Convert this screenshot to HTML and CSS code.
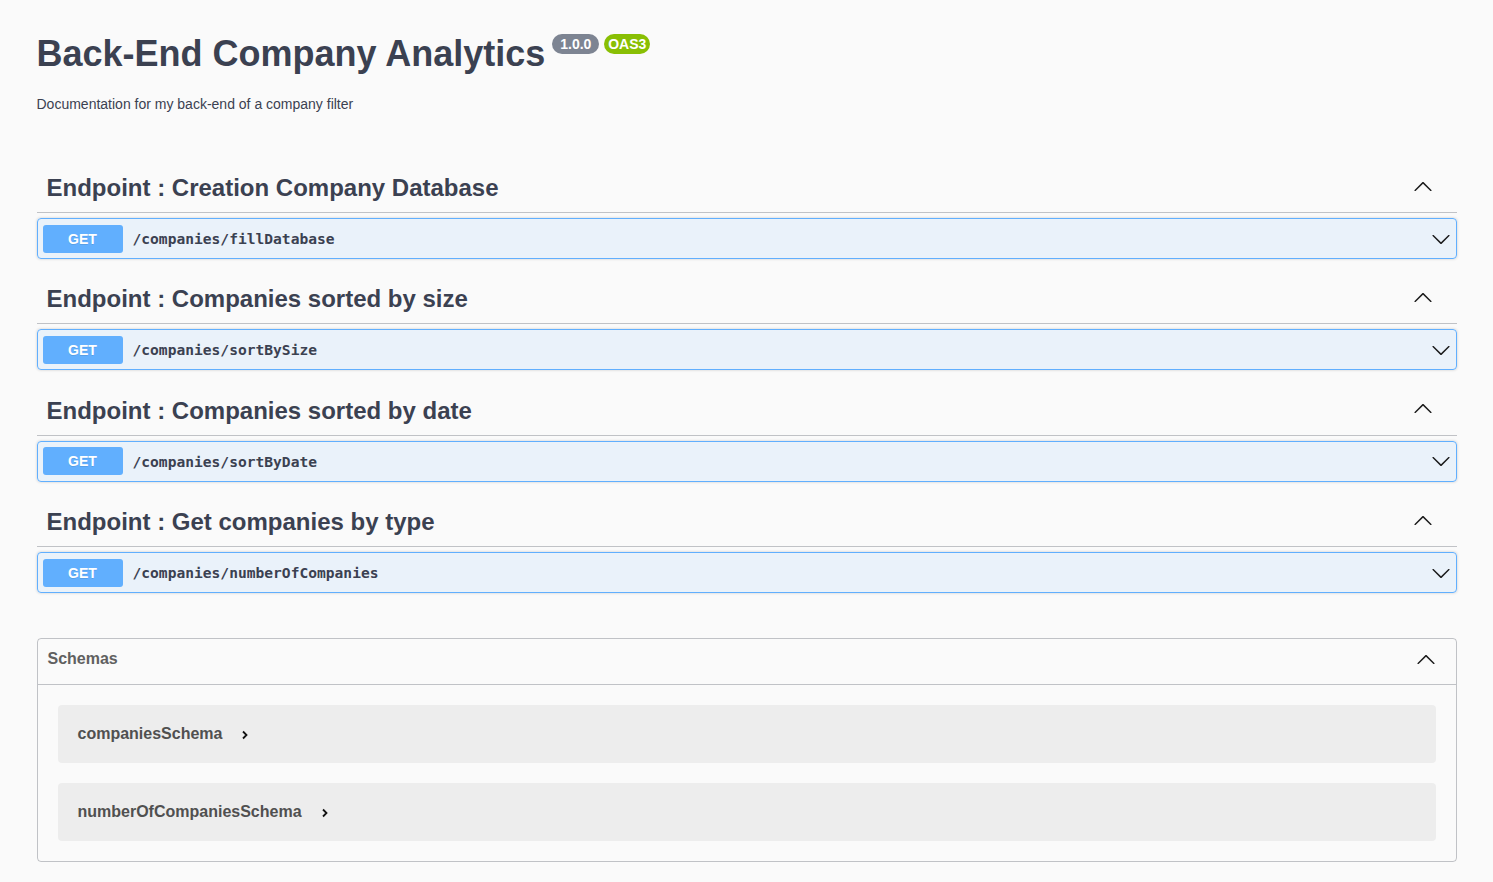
FILE: index.html
```html
<!DOCTYPE html>
<html lang="en">
<head>
<meta charset="utf-8">
<title>Back-End Company Analytics</title>
<link rel="stylesheet" href="styles.css">
</head>
<body>
<div class="wrapper">
  <div class="info">
    <h2 class="title"><span class="title-text">Back-End Company Analytics</span><small class="badge first"><pre> 1.0.0 </pre></small><small class="badge oas"><pre>OAS3</pre></small></h2>
    <p class="desc">Documentation for my back-end of a company filter</p>
  </div>

  <div class="tags">
    <div class="tag-section">
      <h3 class="tag"><span>Endpoint : Creation Company Database</span><span class="spacer"></span><svg class="arrow up" width="20" height="20" viewBox="0 0 20 20"><path d="M17.418 14.908c.272.268.709.268.979 0s.271-.701 0-.969l-7.908-7.83c-.27-.268-.707-.268-.979 0l-7.908 7.83c-.27.268-.27.701 0 .969.271.268.709.268.979 0L10 7.767l7.418 7.141z"/></svg></h3>
      <div class="opblock"><div class="summary"><span class="method">GET</span><span class="path">/companies/fillDatabase</span><span class="spacer"></span><svg class="arrow" width="20" height="20" viewBox="0 0 20 20"><path d="M17.418 6.109c.272-.268.709-.268.979 0s.271.701 0 .969l-7.908 7.83c-.27.268-.707.268-.979 0l-7.908-7.83c-.27-.268-.27-.701 0-.969.271-.268.709-.268.979 0L10 13.25l7.418-7.141z"/></svg></div></div>
    </div>
    <div class="tag-section">
      <h3 class="tag"><span>Endpoint : Companies sorted by size</span><span class="spacer"></span><svg class="arrow up" width="20" height="20" viewBox="0 0 20 20"><path d="M17.418 14.908c.272.268.709.268.979 0s.271-.701 0-.969l-7.908-7.83c-.27-.268-.707-.268-.979 0l-7.908 7.83c-.27.268-.27.701 0 .969.271.268.709.268.979 0L10 7.767l7.418 7.141z"/></svg></h3>
      <div class="opblock"><div class="summary"><span class="method">GET</span><span class="path">/companies/sortBySize</span><span class="spacer"></span><svg class="arrow" width="20" height="20" viewBox="0 0 20 20"><path d="M17.418 6.109c.272-.268.709-.268.979 0s.271.701 0 .969l-7.908 7.83c-.27.268-.707.268-.979 0l-7.908-7.83c-.27-.268-.27-.701 0-.969.271-.268.709-.268.979 0L10 13.25l7.418-7.141z"/></svg></div></div>
    </div>
    <div class="tag-section">
      <h3 class="tag"><span>Endpoint : Companies sorted by date</span><span class="spacer"></span><svg class="arrow up" width="20" height="20" viewBox="0 0 20 20"><path d="M17.418 14.908c.272.268.709.268.979 0s.271-.701 0-.969l-7.908-7.83c-.27-.268-.707-.268-.979 0l-7.908 7.83c-.27.268-.27.701 0 .969.271.268.709.268.979 0L10 7.767l7.418 7.141z"/></svg></h3>
      <div class="opblock"><div class="summary"><span class="method">GET</span><span class="path">/companies/sortByDate</span><span class="spacer"></span><svg class="arrow" width="20" height="20" viewBox="0 0 20 20"><path d="M17.418 6.109c.272-.268.709-.268.979 0s.271.701 0 .969l-7.908 7.83c-.27.268-.707.268-.979 0l-7.908-7.83c-.27-.268-.27-.701 0-.969.271-.268.709-.268.979 0L10 13.25l7.418-7.141z"/></svg></div></div>
    </div>
    <div class="tag-section">
      <h3 class="tag"><span>Endpoint : Get companies by type</span><span class="spacer"></span><svg class="arrow up" width="20" height="20" viewBox="0 0 20 20"><path d="M17.418 14.908c.272.268.709.268.979 0s.271-.701 0-.969l-7.908-7.83c-.27-.268-.707-.268-.979 0l-7.908 7.83c-.27.268-.27.701 0 .969.271.268.709.268.979 0L10 7.767l7.418 7.141z"/></svg></h3>
      <div class="opblock"><div class="summary"><span class="method">GET</span><span class="path">/companies/numberOfCompanies</span><span class="spacer"></span><svg class="arrow" width="20" height="20" viewBox="0 0 20 20"><path d="M17.418 6.109c.272-.268.709-.268.979 0s.271.701 0 .969l-7.908 7.83c-.27.268-.707.268-.979 0l-7.908-7.83c-.27-.268-.27-.701 0-.969.271-.268.709-.268.979 0L10 13.25l7.418-7.141z"/></svg></div></div>
    </div>
  </div>

  <section class="models">
    <h4 class="models-head"><span>Schemas</span><span class="spacer"></span><svg class="arrow" width="20" height="20" viewBox="0 0 20 20"><path d="M17.418 14.908c.272.268.709.268.979 0s.271-.701 0-.969l-7.908-7.83c-.27-.268-.707-.268-.979 0l-7.908 7.83c-.27.268-.27.701 0 .969.271.268.709.268.979 0L10 7.767l7.418 7.141z"/></svg></h4>
    <div class="model-list">
      <div class="model"><span class="model-title">companiesSchema</span><svg class="toggle" width="8" height="10" viewBox="0 0 8 10"><path d="M2 1.5 L5.5 5 L2 8.5"/></svg></div>
      <div class="model"><span class="model-title">numberOfCompaniesSchema</span><svg class="toggle" width="8" height="10" viewBox="0 0 8 10"><path d="M2 1.5 L5.5 5 L2 8.5"/></svg></div>
    </div>
  </section>
</div>
</body>
</html>
```

FILE: styles.css
```css
html, body {
  margin: 0;
  padding: 0;
  background: #fafafa;
}

body {
  font-family: "Liberation Sans", Arial, sans-serif;
  color: #3b4151;
}

.wrapper {
  max-width: 1460px;
  margin: 0 auto;
  padding: 0 20px;
  box-sizing: border-box;
}

.info {
  padding-top: 33px;
}

.title {
  display: flex;
  align-items: flex-start;
  margin: 0;
  font-size: 36px;
  line-height: 42px;
  font-weight: bold;
  color: #3b4151;
}

.badge {
  display: inline-block;
  margin-top: 1px;
  margin-left: 5px;
  padding: 2px 4px;
  border-radius: 57px;
  background: #7d8492;
}

.badge.first {
  margin-left: 7px;
}

.badge.oas {
  background: #89bf04;
}

.badge pre {
  margin: 0;
  font-family: "Liberation Sans", Arial, sans-serif;
  font-size: 14px;
  line-height: 16px;
  font-weight: bold;
  color: #fff;
  white-space: pre;
}

.desc {
  margin: 19px 0 0;
  font-size: 14px;
  line-height: 20px;
  color: #3b4151;
}

.tags {
  display: flex;
  flex-direction: column;
  margin-top: 49px;
}

.tag {
  display: flex;
  align-items: center;
  height: 29px;
  margin: 0 0 5px;
  padding: 10px 20px 10px 10px;
  border-bottom: 1px solid rgba(59, 65, 81, 0.3);
  font-size: 24px;
  line-height: 29px;
  font-weight: bold;
  color: #3b4151;
}

.spacer {
  flex: 1;
}

.arrow {
  display: block;
  flex: none;
  fill: #1b1b1b;
}

.arrow.up {
  margin-right: 4px;
  margin-bottom: 4px;
}

.opblock {
  margin: 0 0 15.4px;
  border: 1px solid #61affe;
  border-radius: 4px;
  background: rgba(97, 175, 254, 0.1);
  box-shadow: 0 0 3px rgba(0, 0, 0, 0.19);
}

.summary {
  display: flex;
  align-items: center;
  height: 29px;
  padding: 5px;
}

.method {
  flex: none;
  width: 80px;
  height: 28px;
  line-height: 28px;
  border-radius: 3px;
  background: #61affe;
  color: #fff;
  font-size: 14px;
  font-weight: bold;
  text-align: center;
  text-shadow: 0 1px 0 rgba(0, 0, 0, 0.1);
}

.path {
  padding: 0 10px;
  font-family: "DejaVu Sans Mono", "Liberation Mono", monospace;
  font-size: 14.6px;
  font-weight: bold;
  color: #3b4151;
}

.models {
  margin-top: 29px;
  border: 1px solid rgba(59, 65, 81, 0.3);
  border-radius: 4px;
}

.models-head {
  display: flex;
  align-items: flex-start;
  margin: 0;
  padding: 10px 20px 15px 10px;
  border-bottom: 1px solid rgba(59, 65, 81, 0.3);
  font-size: 16px;
  line-height: 20px;
  font-weight: bold;
  color: #606060;
}

.model-list {
  display: flex;
  flex-direction: column;
  gap: 20px;
  padding: 20px;
}

.model {
  display: flex;
  align-items: center;
  height: 58px;
  padding: 0 20px;
  border-radius: 4px;
  background: rgba(0, 0, 0, 0.05);
}

.model-title {
  font-size: 16px;
  font-weight: bold;
  color: #505050;
}

.toggle {
  display: block;
  margin-left: 19px;
  margin-top: 2px;
  fill: none;
  stroke: #111;
  stroke-width: 1.8;
}
```
